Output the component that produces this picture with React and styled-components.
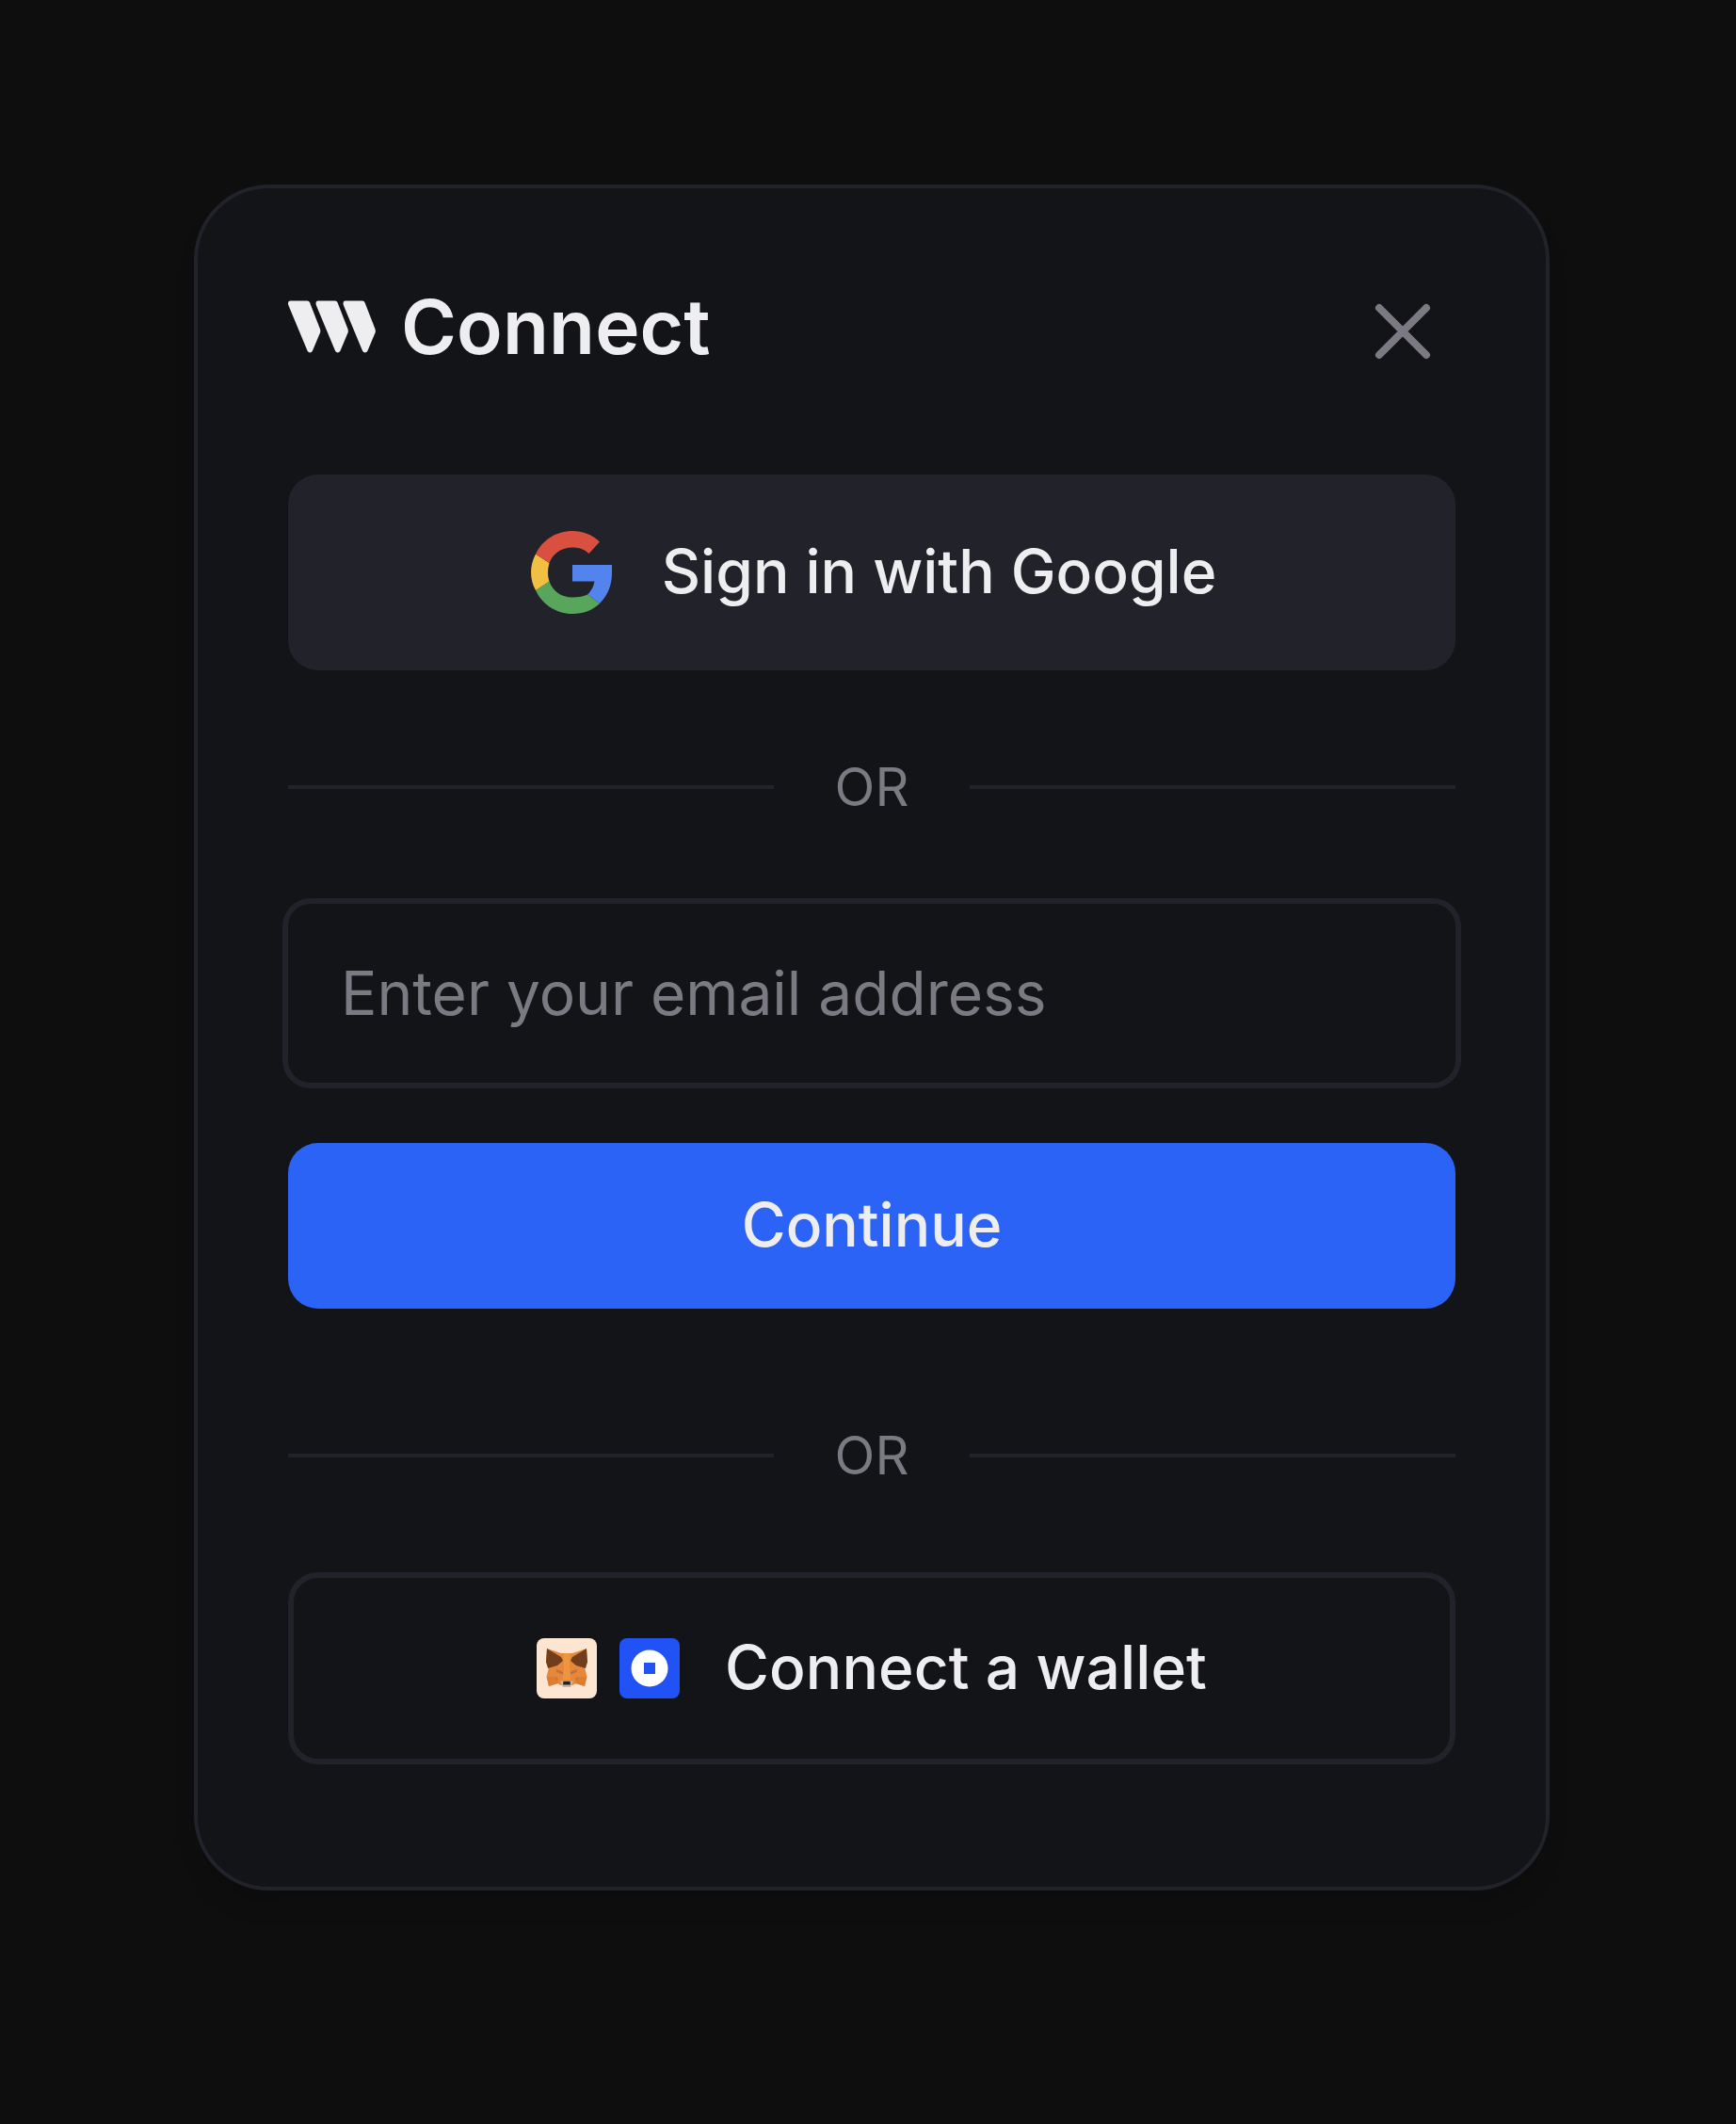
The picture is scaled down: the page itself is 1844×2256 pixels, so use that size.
import React from "react";
import styled, { createGlobalStyle } from "styled-components";

const GlobalStyle = createGlobalStyle`
  *, *::before, *::after { box-sizing: border-box; }
  body {
    margin: 0;
    background: #0e0e0f;
    font-family: Inter, "Liberation Sans", sans-serif;
    -webkit-font-smoothing: antialiased;
  }
`;

const Page = styled.main`
  min-height: 2256px;
  padding: 196px 198px 0 206px;
`;

const Card = styled.section`
  display: flex;
  flex-direction: column;
  width: 1440px;
  height: 1812px;
  padding: 96px;
  border: 4px solid #22222b;
  border-radius: 80px;
  background: #131418;
  box-shadow: 0 20px 28px -10px rgba(0, 0, 0, 0.2);
`;

const Header = styled.header`
  display: flex;
  align-items: center;
  justify-content: space-between;
  height: 112px;
  margin-bottom: 96px;
`;

const Brand = styled.div`
  display: flex;
  align-items: center;
  gap: 26px;
  padding-bottom: 10px;
`;

const Title = styled.h1`
  margin: 0;
  font-size: 80px;
  font-weight: 600;
  line-height: 100px;
  letter-spacing: 0.15px;
  color: #eeeef0;
`;

const CloseButton = styled.button`
  display: flex;
  padding: 0;
  margin: 0 26px 0 0;
  border: 0;
  background: none;
  color: #7b7981;
`;

const Button = styled.button`
  display: flex;
  flex-shrink: 0;
  align-items: center;
  justify-content: center;
  gap: ${(p) => p.$gap || 0}px;
  height: ${(p) => p.$height}px;
  padding: 0 0 0 ${(p) => p.$indent || 0}px;
  border: ${(p) => (p.$outlined ? "6px solid #22222b" : "0")};
  border-radius: 32px;
  background: ${(p) => p.$fill || "transparent"};
  color: #eeeef0;
  font: 500 64px/80px Inter, "Liberation Sans", sans-serif;
`;

const ButtonLabel = styled.span`
  padding-bottom: 2px;
  letter-spacing: ${(p) => p.$tracking || 0}px;
`;

const Divider = styled.div`
  display: flex;
  align-items: center;
  gap: 64px;
  height: 80px;
  margin: ${(p) => p.$margin};
  color: #7b7981;
  font-size: 56px;
  line-height: 80px;

  &::before,
  &::after {
    content: "";
    flex: 1;
    height: 4px;
    background: #22222b;
  }
`;

const DividerLabel = styled.span`
  width: 80px;
  text-align: center;
`;

const EmailInput = styled.input`
  flex-shrink: 0;
  height: 190px;
  margin: 0 0 64px;
  padding: 0 56px 2px;
  border: 0;
  border-radius: 24px;
  outline: none;
  background: transparent;
  box-shadow: 0 0 0 6px #22222b;
  color: #eeeef0;
  font: 400 64px/80px Inter, "Liberation Sans", sans-serif;

  &::placeholder {
    color: #7b7981;
    opacity: 1;
  }
`;

const WalletIcons = styled.span`
  display: flex;
  gap: 24px;
`;

const BrandLogo = () => (
  <svg width="94" height="56" viewBox="0 0 94 56" fill="#eeeef0">
    {[0, 29.5, 58.5].map((x) => (
      <path
        key={x}
        transform={`translate(${x} 0)`}
        d="M2.500 0.500H20.500Q22.300 0.500 23 2.200L34 30.500Q34.700 32.500 34 34.500L26 53.500Q25 55.400 23.300 55.400Q21.500 55.400 20.500 53.500L0.300 5Q-0.800 0.500 2.500 0.500Z"
      />
    ))}
  </svg>
);

const CloseIcon = () => (
  <svg width="60" height="60" viewBox="0 0 60 60" fill="none" stroke="currentColor" strokeWidth="8" strokeLinecap="round">
    <path d="M5 5L55 55M55 5L5 55" />
  </svg>
);

const GoogleIcon = () => (
  <svg width="86" height="88" viewBox="0 0 86 88">
    <path fill="#5383ec" d="M86 36H44V53.500H67.500Q66 62 60 67.500L73 77C81 69 86 58 86 45Z" />
    <path fill="#58a55c" d="M44 88C55.5 88 65.5 84.2 73 77L60 67.500C56 69.500 51 70.500 44 70.500C32.500 70.500 23 64 19.500 53.500L5 63C12 78 27 88 44 88Z" />
    <path fill="#f1bf42" d="M19.5 53.500C17.500 47.500 17.500 40.500 19.500 34L5 24.500C-1.600 37 -1.600 51 5 63Z" />
    <path fill="#d95040" d="M44 17.500C51 17.500 57 19.500 61.500 24L73 11.500C65 4 55.500 0 44 0C27 0 12 9.500 5 24.500L19.500 34C23 24 32.500 17.500 44 17.500Z" />
  </svg>
);

const FoxIcon = () => (
  <svg width="64" height="64" viewBox="0 0 64 64">
    <rect width="64" height="64" rx="8" fill="#fce6d2" />
    <path fill="#e6883b" d="M11 11L26 16H38L53 11L54 26L51 31L53.500 41L51 51L42 48L38 50H26L22 48L13 51L10.500 41L13 31L10 26Z" />
    <path fill="#dc7d34" d="M11 41H22L23 48L13 51ZM53 41H42L41 48L51 51Z" />
    <path fill="#cf6f30" d="M21 33L27 35L28 38.500L21 36ZM43 33L37 35L36 38.500L43 36ZM19 42L23 43L22 45ZM45 42L41 43L42 45Z" />
    <path fill="#723d1c" d="M11 11L26 20L28 24L22 29L12 32L10 25ZM53 11L38 20L36 24L42 29L52 32L54 25Z" />
    <path fill="#ef953f" d="M28.500 16H35.500L35 32L36 44H28L29 32Z" />
    <path fill="#98745a" d="M23.500 35.500L28 36.500V38.500ZM40.500 35.500L36 36.500V38.500Z" />
    <path fill="#c8b5a4" d="M25 46L29 45H35L39 46L36 52H28Z" />
    <path fill="#2a211d" d="M28.500 45.800H35.500L36 49.500H28Z" />
  </svg>
);

const CoinIcon = () => (
  <svg width="64" height="64" viewBox="0 0 64 64">
    <rect width="64" height="64" rx="8" fill="#2152f5" />
    <circle cx="32" cy="32" r="19.500" fill="#fff" />
    <rect x="26" y="26" width="12" height="12" fill="#2152f5" />
  </svg>
);

export default function App() {
  return (
    <>
      <GlobalStyle />
      <Page>
        <Card>
          <Header>
            <Brand>
              <BrandLogo />
              <Title>Connect</Title>
            </Brand>
            <CloseButton aria-label="Close">
              <CloseIcon />
            </CloseButton>
          </Header>
          <Button $height={208} $gap={53} $indent={4} $fill="#22222b">
            <GoogleIcon />
            <ButtonLabel>Sign in with Google</ButtonLabel>
          </Button>
          <Divider $margin="84px 0 84px">
            <DividerLabel>OR</DividerLabel>
          </Divider>
          <EmailInput type="email" placeholder="Enter your email address" />
          <Button $height={176} $fill="#2b63f6">
            <ButtonLabel>Continue</ButtonLabel>
          </Button>
          <Divider $margin="116px 0 84px">
            <DividerLabel>OR</DividerLabel>
          </Divider>
          <Button $height={204} $gap={48} $outlined>
            <WalletIcons>
              <FoxIcon />
              <CoinIcon />
            </WalletIcons>
            <ButtonLabel $tracking={0.1}>Connect a wallet</ButtonLabel>
          </Button>
        </Card>
      </Page>
    </>
  );
}
